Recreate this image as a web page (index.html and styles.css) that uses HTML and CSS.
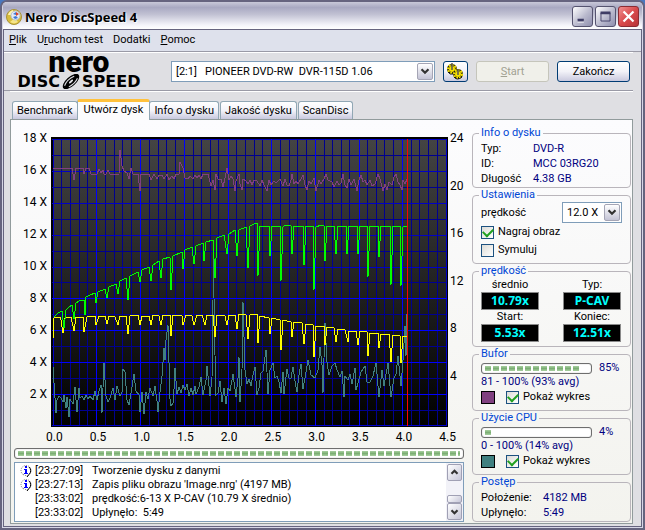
FILE: index.html
```html
<!DOCTYPE html>
<html lang="pl">
<head>
<meta charset="utf-8">
<title>Nero DiscSpeed 4</title>
<link rel="stylesheet" href="styles.css">
</head>
<body>
<div class="window">
  <header class="titlebar">
    <svg class="app-icon" viewBox="0 0 16 16" aria-hidden="true">
      <circle cx="8" cy="8" r="7.500" fill="#d9bd3c" stroke="#a8923a"/>
      <path d="M2 6a7 7 0 0 1 5-5l1 5z" fill="#fff3b0"/>
      <path d="M4 13a7 7 0 0 0 8 0l-3-4z" fill="#f6e58a"/>
      <circle cx="9.500" cy="6.500" r="4.500" fill="#e4ebf5" stroke="#b4c0d0"/>
      <path d="M7 5l3-2v3z" fill="#3c78d8"/><path d="M10 3l3 2-3 2z" fill="#d8402c"/><path d="M7 8l3-1 2 2-3 1z" fill="#3c78d8"/>
    </svg>
    <h1>Nero DiscSpeed 4</h1>
    <div class="caption-buttons">
      <button type="button" aria-label="Minimalizuj"><svg viewBox="0 0 21 21"><path d="M5 14h7v3H5z" fill="#fff"/><path d="M5 13h7v3H5z" fill="#3f3d66"/></svg></button>
      <button type="button" aria-label="Maksymalizuj"><svg viewBox="0 0 21 21"><path d="M5.500 6.500h10v9h-10z" fill="none" stroke="#3f3d66"/><path d="M5 5h11v3H5z" fill="#3f3d66"/></svg></button>
      <button type="button" class="close" aria-label="Zamknij"><svg viewBox="0 0 21 21"><path d="M5 5l11 11M16 5L5 16" stroke="#fff" stroke-width="2.500"/></svg></button>
    </div>
  </header>

  <main class="client">
    <nav class="menu">
      <a href="#"><u>P</u>lik</a>
      <a href="#">U<u>r</u>uchom test</a>
      <a href="#">Dodatki</a>
      <a href="#"><u>P</u>omoc</a>
    </nav>

    <div class="toolbar">
      <div class="logo">
        <span class="logo-nero">nero</span>
        <span class="logo-product">DISC
          <svg viewBox="0 0 20 14" aria-hidden="true"><ellipse cx="10" cy="7" rx="9.500" ry="4.500" transform="rotate(-42 10 7)" fill="#000"/><path d="M4 11Q6 5 13 2M8 12Q14 9 16 4" stroke="#dcdce1" fill="none"/><ellipse cx="10" cy="7" rx="2.500" ry="1" transform="rotate(-42 10 7)" fill="#dcdce1"/></svg>
          SPEED</span>
      </div>
      <div class="combo combo-drive">
        <select aria-label="Napęd"><option>[2:1] &nbsp; PIONEER DVD-RW &nbsp;DVR-115D 1.06</option></select>
        <svg class="arrow" viewBox="0 0 16 17" aria-hidden="true"><path d="M4 6l4 4 4-4" fill="none" stroke="#333" stroke-width="2.500"/></svg>
      </div>
      <button type="button" class="btn btn-icon" aria-label="Opcje">
        <svg viewBox="0 0 19 17">
          <circle cx="6" cy="6" r="4" fill="#f5e000" stroke="#111" stroke-width="2"/>
          <circle cx="6" cy="6" r="4" fill="none" stroke="#f5e000" stroke-width="2" stroke-dasharray="2 1"/>
          <circle cx="12" cy="11" r="4" fill="#f5e000" stroke="#111" stroke-width="2"/>
          <circle cx="12" cy="11" r="4" fill="none" stroke="#f5e000" stroke-width="2" stroke-dasharray="2 1"/>
          <path d="M2 9q2 3 5 2M8 14q3 4 8 0" fill="none" stroke="#111"/>
          <path d="M6 0v7M12 6v6" stroke="#555" stroke-width="1.500"/>
        </svg>
      </button>
      <button type="button" class="btn" disabled><u>S</u>tart</button>
      <button type="button" class="btn">Zakończ</button>
    </div>

    <div class="tabs" role="tablist">
      <button type="button" role="tab">Benchmark</button>
      <button type="button" role="tab" class="active" aria-selected="true">Utwórz dysk</button>
      <button type="button" role="tab">Info o dysku</button>
      <button type="button" role="tab">Jakość dysku</button>
      <button type="button" role="tab">ScanDisc</button>
    </div>

    <section class="panel">
      <div class="left">
        <div class="chart">
          <div class="axis axis-speed"><span>18 X</span><span>16 X</span><span>14 X</span><span>12 X</span><span>10 X</span><span>8 X</span><span>6 X</span><span>4 X</span><span>2 X</span></div>
          <svg class="plot" viewBox="51 137 397 290" preserveAspectRatio="none" role="img" aria-label="Wykres prędkości zapisu">
            <defs>
              <linearGradient id="backdrop" x1="0" y1="0" x2="0" y2="1"><stop offset="0" stop-color="#444"/><stop offset="1" stop-color="#000"/></linearGradient>
            </defs>
            <rect x="51" y="137" width="397" height="290" fill="#000"/>
            <rect x="53" y="139" width="393" height="287" fill="url(#backdrop)"/>
            <path class="minor" d="M61.500 139V426M70.500 139V426M79.500 139V426M87.500 139V426M105.500 139V426M114.500 139V426M122.500 139V426M131.500 139V426M149.500 139V426M158.500 139V426M166.500 139V426M175.500 139V426M193.500 139V426M201.500 139V426M210.500 139V426M218.500 139V426M236.500 139V426M245.500 139V426M254.500 139V426M262.500 139V426M280.500 139V426M289.500 139V426M297.500 139V426M306.500 139V426M324.500 139V426M332.500 139V426M341.500 139V426M349.500 139V426M367.500 139V426M376.500 139V426M384.500 139V426M393.500 139V426M411.500 139V426M419.500 139V426M428.500 139V426M437.500 139V426"/>
            <path class="minor" d="M52 155.500H447M52 187.500H447M52 219.500H447M52 251.500H447M52 282.500H447M52 314.500H447M52 346.500H447M52 378.500H447M52 410.500H447"/>
            <path class="middle" d="M52 139.500H447M52 171.500H447M52 203.500H447M52 235.500H447M52 267.500H447M53.500 139V426M446.500 139V426M52 425.500H447"/>
            <path class="major" d="M52 298.500H447M52 330.500H447M52 362.500H447M52 394.500H447M96.500 139V426M140.500 139V426M184.500 139V426M228.500 139V426M271.500 139V426M315.500 139V426M359.500 139V426M402.500 139V426"/>
            <polyline class="buffer" points="53,168 72,168 74,180 76,168 83,168 84,174 86,168 89,168 91,174 97,174 99,169 101,173 103,170 104,174 106,174 108,170 110,174 119,174 120,150 122,166 124,171 127,173 129,179 131,168 133,174 138,174 140,191 141,174 149,174 151,180 154,174 157,179 159,175 162,175 164,179 167,174 169,180 172,176 174,179 176,174 179,174 180,162 183,168 185,178 188,179 190,176 193,179 195,175 197,178 199,175 201,179 203,174 208,174 211,186 213,180 215,190 216,174 218,179 221,179 223,187 225,178 227,168 229,180 231,176 233,179 235,191 236,181 239,174 240,184 242,190 243,179 246,181 248,184 250,180 252,185 254,180 257,181 260,186 262,180 264,185 267,191 269,180 271,185 274,181 276,183 280,179 283,186 285,179 287,185 289,186 291,180 292,174 294,184 296,181 298,184 301,179 303,175 305,185 307,190 309,181 311,184 314,178 316,191 319,180 321,184 324,179 326,174 328,180 332,182 334,187 337,181 339,185 341,183 343,174 345,185 347,188 349,179 351,185 354,179 357,191 359,180 361,175 363,182 365,180 367,185 370,180 372,186 375,184 378,174 380,179 383,191 385,184 387,190 389,182 392,185 394,177 396,174 398,182 400,185 402,190 403,180 405,184 407,179"/>
            <polyline class="cpu" points="53,367 55,398 56,413 57,400 59,396 61,398 63,402 64,395 66,408 67,397 69,417 70,399 73,404 75,387 77,412 79,388 80,398 82,396 84,400 86,395 88,399 90,396 93,400 95,391 97,400 99,391 101,385 102,413 104,363 106,396 108,402 110,398 113,388 115,400 117,386 120,396 122,392 123,369 125,372 127,400 129,405 131,393 134,374 136,391 139,395 140,412 142,392 144,414 146,392 148,399 150,388 153,396 155,386 157,401 158,412 160,392 162,376 164,348 165,360 166,340 168,325 170,399 171,406 173,403 174,389 175,368 177,394 179,387 181,393 183,385 185,390 187,384 189,396 191,388 193,395 195,386 196,394 199,387 201,377 203,395 206,380 207,366 210,396 212,378 213,300 213,240 215,355 216,395 218,393 220,381 222,402 224,388 226,404 228,388 230,391 233,374 236,397 238,378 239,357 240,402 242,370 243,302 245,370 247,384 249,379 251,386 253,375 255,367 257,395 259,388 261,373 263,371 266,350 268,394 270,370 273,363 275,378 277,376 279,382 281,393 283,372 284,394 287,369 289,378 291,378 293,367 295,381 297,392 299,375 301,364 303,389 305,378 308,360 311,375 315,378 318,370 320,347 322,365 323,393 325,323 327,362 329,375 332,366 335,363 337,370 340,377 342,371 344,397 345,376 348,380 350,374 352,384 355,368 356,390 358,383 361,372 365,366 367,382 370,382 373,376 376,363 379,397 382,370 384,386 388,363 391,397 394,378 396,374 398,356 401,386 403,360 405,326 406,356 407,314"/>
            <polyline class="rotation" points="53,338 54,318 56,317 60,317 61,320 63,333 65,318 71,317 74,331 76,317 83,317 84,332 87,317 95,316 96,325 99,316 105,316 107,324 109,316 115,317 118,325 120,316 126,316 128,334 130,316 138,315 140,325 142,316 149,316 151,325 153,315 159,316 161,325 163,315 170,315 171,336 173,315 182,316 183,325 186,315 192,316 194,325 197,315 202,315 205,325 207,315 213,315 215,337 217,315 225,316 227,325 229,315 235,315 237,329 239,314 246,315 248,339 250,315 257,314 258,343 260,316 269,318 270,334 272,318 280,320 281,350 283,320 291,322 292,337 294,322 302,323 304,344 306,324 313,325 314,357 316,326 324,326 325,345 327,327 334,328 336,342 338,329 345,330 348,342 349,331 356,331 358,345 360,331 367,332 368,356 370,333 378,333 379,348 381,334 389,334 391,362 393,335 400,336 401,363 403,336 407,336"/>
            <polyline class="speed" points="54,317 58,313 62,311 64,328 66,310 68,308 72,305 74,319 76,303 79,301 84,300 85,315 86,297 90,295 95,293 96,303 98,292 105,289 107,298 109,287 116,284 118,294 120,281 126,278 128,300 130,276 138,272 140,282 142,270 149,267 151,281 153,265 159,261 161,278 163,259 170,257 171,290 173,256 182,252 183,269 185,250 192,247 194,264 196,246 203,243 204,261 206,242 213,240 215,278 217,238 224,235 227,254 229,234 235,230 237,256 239,230 246,227 248,268 250,226 254,224 257,223 258,276 260,226 269,226 270,256 272,226 280,226 281,281 283,227 285,225 291,226 292,254 294,226 303,226 304,265 306,226 313,226 314,290 316,227 321,225 324,226 325,261 327,226 334,226 336,254 338,226 346,226 347,254 349,226 357,226 358,254 360,226 367,226 368,277 370,226 378,226 379,257 381,226 390,226 391,285 393,226 400,226 401,286 403,227 405,226 407,226"/>
            <path class="cursor" d="M407.500 139V426"/>
          </svg>
          <div class="axis axis-rpm"><span>24</span><span>20</span><span>16</span><span>12</span><span>8</span><span>4</span></div>
        </div>
        <div class="axis-size"><span>0.0</span><span>0.5</span><span>1.0</span><span>1.5</span><span>2.0</span><span>2.5</span><span>3.0</span><span>3.5</span><span>4.0</span><span>4.5</span></div>
        <div class="progress" role="progressbar" aria-label="Postęp zapisu" aria-valuenow="100"><div class="fill" style="width:100%"></div></div>
        <div class="log">
          <ul>
            <li><svg viewBox="0 0 12 12" aria-hidden="true"><path d="M3 9.500A5 5 0 1 1 9 9.500L7 11z" fill="#fff" stroke="#777" stroke-dasharray="1 1"/><path d="M9 2a5 5 0 0 1 0 7.500L7 12" fill="none" stroke="#000"/><path d="M5 1h2v2H5zM4 4h3v4h1v1H4V8h1V5H4z" fill="#00f"/></svg><time>[23:27:09]</time><span>Tworzenie dysku z danymi</span></li>
            <li><svg viewBox="0 0 12 12" aria-hidden="true"><path d="M3 9.500A5 5 0 1 1 9 9.500L7 11z" fill="#fff" stroke="#777" stroke-dasharray="1 1"/><path d="M9 2a5 5 0 0 1 0 7.500L7 12" fill="none" stroke="#000"/><path d="M5 1h2v2H5zM4 4h3v4h1v1H4V8h1V5H4z" fill="#00f"/></svg><time>[23:27:13]</time><span>Zapis pliku obrazu 'Image.nrg' (4197 MB)</span></li>
            <li><i></i><time>[23:33:02]</time><span>prędkość:6-13 X P-CAV (10.79 X średnio)</span></li>
            <li><i></i><time>[23:33:02]</time><span>Upłynęło: &nbsp;5:49</span></li>
          </ul>
          <div class="scrollbar">
            <button type="button" aria-label="W górę"><svg viewBox="0 0 15 15"><path d="M4 9l3.500-3.500L11 9" fill="none" stroke="#333" stroke-width="2.500"/></svg></button>
            <div class="thumb"></div>
            <button type="button" aria-label="W dół"><svg viewBox="0 0 15 15"><path d="M4 6l3.500 3.500L11 6" fill="none" stroke="#333" stroke-width="2.500"/></svg></button>
          </div>
        </div>
      </div>

      <aside class="right">
        <fieldset class="rows">
          <legend>Info o dysku</legend>
          <dl class="info"><dt>Typ:</dt><dd>DVD-R</dd><dt>ID:</dt><dd>MCC 03RG20</dd><dt>Długość</dt><dd>4.38 GB</dd></dl>
        </fieldset>
        <fieldset class="settings">
          <legend>Ustawienia</legend>
          <div class="speed-row">
            <label for="speed">prędkość</label>
            <div class="combo">
              <select id="speed"><option>12.0 X</option></select>
              <svg class="arrow" viewBox="0 0 16 17" aria-hidden="true"><path d="M4 6l4 4 4-4" fill="none" stroke="#333" stroke-width="2.500"/></svg>
            </div>
          </div>
          <label class="check"><input type="checkbox" checked>Nagraj obraz</label>
          <label class="check"><input type="checkbox">Symuluj</label>
        </fieldset>
        <fieldset>
          <legend>prędkość</legend>
          <div class="readouts">
            <div>średnio<output>10.79x</output></div>
            <div>Typ:<output>P-CAV</output></div>
            <div>Start:<output>5.53x</output></div>
            <div>Koniec:<output>12.51x</output></div>
          </div>
        </fieldset>
        <fieldset>
          <legend>Bufor</legend>
          <div class="meter"><div class="progress" role="progressbar" aria-label="Bufor" aria-valuenow="85"><div class="fill" style="width:92%"></div></div><span>85%</span></div>
          <p>81 - 100% (93% avg)</p>
          <div class="show"><span class="swatch swatch-buffer"></span><label class="check"><input type="checkbox" checked>Pokaż wykres</label></div>
        </fieldset>
        <fieldset>
          <legend>Użycie CPU</legend>
          <div class="meter"><div class="progress" role="progressbar" aria-label="Użycie CPU" aria-valuenow="4"><div class="fill" style="width:6%"></div></div><span>4%</span></div>
          <p>0 - 100% (14% avg)</p>
          <div class="show"><span class="swatch swatch-cpu"></span><label class="check"><input type="checkbox" checked>Pokaż wykres</label></div>
        </fieldset>
        <fieldset class="rows">
          <legend>Postęp</legend>
          <dl class="state"><dt>Położenie:</dt><dd>4182 MB</dd><dt>Upłynęło:</dt><dd>5:49</dd></dl>
        </fieldset>
      </aside>
    </section>
  </main>
</div>
</body>
</html>
```
FILE: styles.css
```css
* { box-sizing: border-box; }

body {
  margin: 0;
  background: #4a78c0;
  font: 11px/14px Roboto, "Liberation Sans", sans-serif;
  color: #000;
}

button, select, input { font: inherit; color: inherit; margin: 0; }
svg { display: block; }

.window {
  display: flex;
  flex-direction: column;
  min-height: 100vh;
  padding: 0 1px 1px;
  border: 2px solid #66647f;
  border-radius: 7px 7px 0 0;
  background: #d6d6e6;
  overflow: hidden;
}

/* title bar */
.titlebar {
  display: flex;
  align-items: center;
  gap: 3px;
  height: 27px;
  padding: 2px 3px 0 3px;
  background: linear-gradient(#c9c9d9, #a9a9c2 20%, #c0c0d2 45%, #f4f4fa 85%, #fff);
}
.app-icon { width: 16px; height: 16px; }
.titlebar h1 {
  flex: 1;
  margin: 0;
  font: bold 13px/18px "Open Sans", "Noto Sans", sans-serif;
  text-shadow: 1px 1px 1px #fff;
}
.caption-buttons { display: flex; gap: 2px; }
.caption-buttons button {
  width: 21px;
  height: 21px;
  padding: 0;
  border: 1px solid #55536f;
  border-radius: 3px;
  background: linear-gradient(135deg, #fff, #b9b9cd 55%, #8f8fae);
}
.caption-buttons svg { width: 19px; height: 19px; }
.caption-buttons .close {
  border-color: #8b2c33;
  background: linear-gradient(135deg, #f09090, #d94a4c 50%, #b73438);
}

.client {
  display: flex;
  flex: 1;
  flex-direction: column;
  border: 1px solid #66647f;
  background: #dfdfe3;
  padding: 0 8px 2px 6px;
}

/* menu */
.menu {
  display: flex;
  gap: 10px;
  height: 22px;
  margin: 0 -8px 0 -6px;
  padding: 3px 5px;
  border-bottom: 1px solid #9a9aa6;
  background: #dee1ec;
}
.menu a { color: #000; text-decoration: none; }

/* toolbar */
.toolbar {
  display: flex;
  align-items: center;
  gap: 8px;
  height: 39px;
  margin: 0 0 0 -6px;
  padding: 0 3px 0 10px;
  border-top: 1px solid #fff;
  border-bottom: 1px solid #9a9aa6;
}
.logo {
  display: flex;
  flex-direction: column;
  align-items: center;
  width: 130px;
  margin-right: 19px;
  padding-bottom: 6px;
}
.logo-nero { font: 900 30px/25px Roboto, sans-serif; }
.logo-product {
  display: flex;
  align-items: center;
  font: bold 16px/15px "DejaVu Sans", sans-serif;
}
.logo-product svg { width: 22px; height: 15px; }

.combo {
  display: flex;
  align-items: center;
  height: 21px;
  padding-right: 1px;
  border: 1px solid #7f9db9;
  background: #fff;
}
.combo select {
  flex: 1;
  min-width: 0;
  height: 19px;
  padding: 0 0 0 4px;
  border: 0;
  appearance: none;
  background: transparent;
}
.combo-drive { flex: 1; }
.arrow {
  width: 16px;
  height: 17px;
  border: 1px solid #a5a5b5;
  border-radius: 2px;
  background: linear-gradient(#fff, #c4c4d6);
}

.btn {
  width: 73px;
  height: 21px;
  padding: 0;
  border: 1px solid #003c74;
  border-radius: 3px;
  background: linear-gradient(#fff, #f2f2f8 50%, #c9c9de);
}
.btn:disabled { border-color: #c5c5bb; background: #f0f0ea; color: #a1a192; }
.btn-icon { width: 25px; }
.btn-icon svg { width: 19px; height: 17px; margin: 0 auto; }

/* tabs */
.tabs {
  display: flex;
  align-items: flex-end;
  gap: 1px;
  height: 28px;
  padding-left: 2px;
  border-top: 1px solid #fff;
}
.tabs button {
  height: 18px;
  padding: 0 4px;
  border: 1px solid #91a7b4;
  border-bottom: 0;
  border-radius: 3px 3px 0 0;
  background: linear-gradient(#fff, #f3f3f9 50%, #c8c8de);
}
.tabs .active {
  z-index: 1;
  height: 21px;
  margin: 0 -2px -1px;
  padding: 0 6px 3px;
  border-top: 3px solid #ffc13c;
  background: #fcfcfd;
}

/* page */
.panel {
  display: grid;
  flex: 1;
  grid-template-columns: minmax(0, 1fr) 159px;
  gap: 8px;
  padding: 2px 1px 1px 3px;
  border: 1px solid #919b9c;
  background: linear-gradient(#fcfcfe, #f3f3ee);
}
.left { display: flex; flex-direction: column; }

.chart {
  display: grid;
  flex: 1;
  grid-template-columns: 37px minmax(0, 1fr) 16px;
  min-height: 305px;
}
.plot { width: 100%; height: calc(100% - 15px); margin-top: 15px; shape-rendering: crispEdges; }
.plot path, .plot polyline { fill: none; stroke-width: 1; }
.plot .minor { stroke: #000090; }
.plot .middle { stroke: #0000c8; }
.plot .major { stroke: #0000ff; }
.plot .buffer { stroke: #804080; }
.plot .cpu { stroke: #408080; }
.plot .rotation { stroke: #ffff00; }
.plot .speed { stroke: #00ff00; }
.plot .cursor { stroke: #ff0000; }

.axis {
  display: flex;
  flex-direction: column;
  justify-content: space-between;
  font-size: 12px;
  line-height: 16px;
}
.axis-speed { padding: 8px 4px 25px 0; text-align: right; }
.axis-rpm { padding: 8px 0 43px 2px; }
.axis-size {
  display: flex;
  justify-content: space-between;
  padding: 3px 8px 4px 32px;
  font-size: 12px;
}

.progress {
  height: 11px;
  padding: 2px 3px;
  border: 1px solid #6e6e6e;
  border-radius: 3px;
  background: #fff;
  box-shadow: inset 0 0 1px #888;
}
.fill {
  height: 5px;
  background:
    repeating-linear-gradient(90deg, transparent 0 6px, #fff 6px 8px),
    linear-gradient(#a8d0a0, #7cae74 50%, #a8d0a0);
}

.log {
  display: flex;
  justify-content: space-between;
  height: 60px;
  margin-top: 3px;
  border: 1px solid #7f9db9;
  background: #fff;
}
.log ul { margin: 0; padding: 1px 0 0 5px; list-style: none; }
.log li { display: flex; align-items: center; height: 14px; white-space: pre; }
.log li svg, .log li i { width: 12px; height: 12px; margin-right: 3px; }
.log time { width: 57px; }
.scrollbar {
  display: flex;
  flex-direction: column;
  width: 17px;
  padding: 1px;
  background: #f2f2f8;
}
.scrollbar button, .thumb {
  padding: 0;
  border: 1px solid #a0a0b4;
  border-radius: 2px;
  background: linear-gradient(135deg, #fff, #c6c6d8);
}
.scrollbar button { width: 15px; height: 17px; }
.scrollbar button svg { width: 13px; height: 15px; }
.thumb { height: 8px; margin-top: auto; }

/* groups */
.right { display: flex; flex-direction: column; gap: 1px; padding-top: 5px; }
fieldset {
  min-width: 0;
  margin: 0;
  padding: 1px 8px 4px;
  border: 1px solid #b9b5bb;
  border-radius: 4px;
}
legend { margin-left: -2px; padding: 0 2px; line-height: 12px; color: #0046d5; }
.rows { padding: 2px 8px 1px; }
dl { display: grid; margin: 0; line-height: 15px; }
.info { grid-template-columns: 52px 1fr; }
.state { grid-template-columns: 62px 1fr; }
dd { margin: 0; color: #000080; }

.speed-row { display: flex; align-items: center; justify-content: space-between; }
.speed-row .combo { width: 60px; }
.settings .check { height: 18px; }
.check { display: flex; align-items: center; gap: 4px; }
.check input {
  appearance: none;
  display: grid;
  place-items: center;
  width: 13px;
  height: 13px;
  border: 1px solid #1c5180;
  background: linear-gradient(135deg, #dcdcd7, #fff);
}
.check input:checked::before {
  content: "";
  width: 8px;
  height: 5px;
  margin-top: -2px;
  border: solid #21a121;
  border-width: 0 0 2px 2px;
  transform: rotate(-45deg);
}

.readouts {
  display: grid;
  grid-template-columns: 58px 58px;
  gap: 0 24px;
  text-align: center;
}
output {
  display: block;
  height: 18px;
  border: 1px solid #8a8a8a;
  background: #000;
  color: #00ffff;
  font: bold 12px/15px "Noto Sans", "DejaVu Sans", sans-serif;
}

.meter { display: flex; align-items: center; gap: 7px; height: 14px; color: #000080; }
.meter .progress { width: 111px; }
fieldset p { margin: 0; line-height: 13px; color: #000080; }
.show { display: flex; align-items: center; gap: 11px; height: 18px; }
.swatch { width: 14px; height: 13px; border: 1px solid #000; }
.swatch-buffer { background: #804080; }
.swatch-cpu { background: #408080; }
```
